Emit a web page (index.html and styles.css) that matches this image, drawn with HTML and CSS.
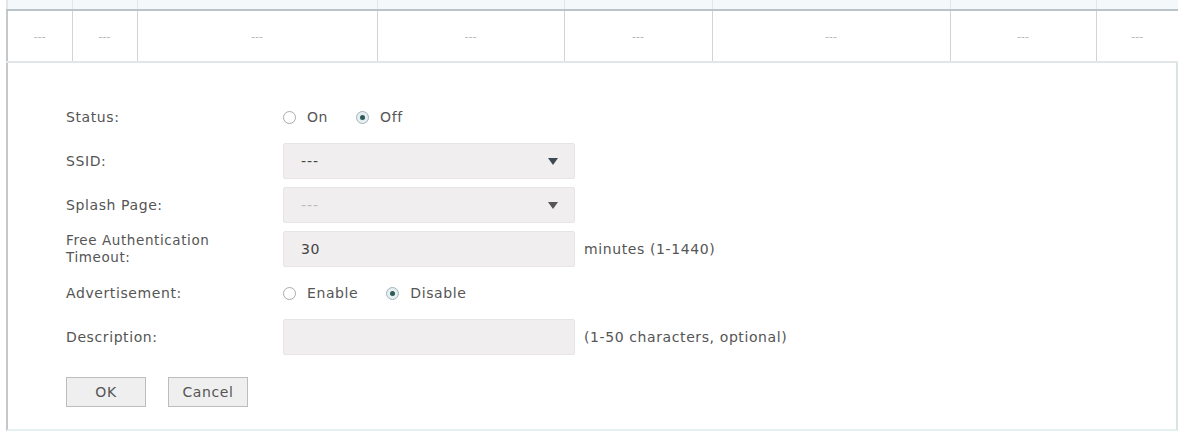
FILE: index.html
```
<!DOCTYPE html>
<html>
<head>
<meta http-equiv="Content-Type" content="text/html; charset=utf-8">
<link rel="stylesheet" href="styles.css">
</head>
<body>
	<table class="list">
	<colgroup>
		<col class="c1"><col class="c2"><col class="c3"><col class="c4">
		<col class="c5"><col class="c6"><col class="c7"><col>
	</colgroup>
	<tr class="head"><td></td><td></td><td></td><td></td><td></td><td></td><td></td><td></td></tr>
	<tr class="row">
		<td>---</td><td>---</td><td>---</td><td>---</td>
		<td>---</td><td>---</td><td>---</td><td>---</td>
	</tr>
	</table>
	<div class="edit">
		<div class="line">
			<label>Status:</label>
			<div class="radios">
				<span class="rd"><i></i>On</span>
				<span class="rd on"><i></i>Off</span>
			</div>
		</div>
		<div class="line">
			<label>SSID:</label>
			<div class="sel">---<b></b></div>
		</div>
		<div class="line">
			<label>Splash Page:</label>
			<div class="sel dis">---<b></b></div>
		</div>
		<div class="line">
			<label class="two">Free Authentication<br>Timeout:</label>
			<div class="ipt">30</div>
			<span class="tip">minutes (1-1440)</span>
		</div>
		<div class="line">
			<label>Advertisement:</label>
			<div class="radios">
				<span class="rd"><i></i>Enable</span>
				<span class="rd on"><i></i>Disable</span>
			</div>
		</div>
		<div class="line">
			<label>Description:</label>
			<div class="ipt"></div>
			<span class="tip">(1-50 characters, optional)</span>
		</div>
		<div class="btns">
			<a class="btn">OK</a><a class="btn">Cancel</a>
		</div>
	</div>
</body>
</html>
```
FILE: styles.css
```
html,body{margin:0;background:#fff}
body{padding:0 1px 0 6px;font-family:"DejaVu Sans",Verdana,sans-serif;font-size:14px;letter-spacing:0.6px;color:#555}
.list{width:100%;border-collapse:collapse;table-layout:fixed}
.list td{border-left:1px solid #d0d4d6;text-align:center;color:#b4b4b4;font-size:11px;letter-spacing:0;padding:0}
.list td:first-child{border-left:2px solid #c4c8ca}
.list .head td{height:9px;background:#f4f8fa;border-bottom:2px solid #b9c4c9;border-left-color:#e2e6e8}
.list .row td{height:50px;border-bottom:2px solid #e2e6e8}
.list .c1{width:65px}.list .c2{width:65px}.list .c3{width:240px}.list .c4{width:187px}
.list .c5{width:148px}.list .c6{width:238px}.list .c7{width:146px}
.edit{border-left:2px solid #c4c8ca;border-right:2px solid #dde2e2;border-bottom:2px solid #e4efef;padding:36px 0 0 58px;box-sizing:border-box;height:368px}
.line{display:flex;align-items:center;height:36px;margin-bottom:8px}
.line label{width:217px;flex:none}
.line label.two{line-height:17px;font-size:13.5px}
.radios{display:flex;align-items:center}
.rd{display:flex;align-items:center;margin-right:28px}
.rd i{width:13px;height:13px;border:1px solid #aaa;border-radius:50%;margin:0 11px 0 0;box-sizing:border-box;display:flex;align-items:center;justify-content:center}
.rd.on i{border-color:#9fb6c0;background:#e8eef0}
.rd.on i:after{content:"";width:5px;height:5px;border-radius:50%;background:#2c5a5a}
.sel,.ipt{width:292px;height:36px;box-sizing:border-box;background:#f0eeee;border:1px solid #e6e4e4;border-radius:2px;padding:0 17px;display:flex;align-items:center;flex:none}
.sel{justify-content:space-between;color:#444;letter-spacing:1px}
.sel.dis{color:#bbb}
.sel b{width:0;height:0;border-left:5px solid transparent;border-right:5px solid transparent;border-top:7px solid #3c4a54;margin-right:-1px}
.sel.dis b{border-top-color:#555}
.ipt{color:#444}
.tip{margin-left:9px}
.btns{display:flex;gap:22px;margin-top:22px}
.btn{width:80px;height:30px;box-sizing:border-box;border:1px solid #bdbdbd;background:#efefef;display:flex;align-items:center;justify-content:center;color:#555}
```
